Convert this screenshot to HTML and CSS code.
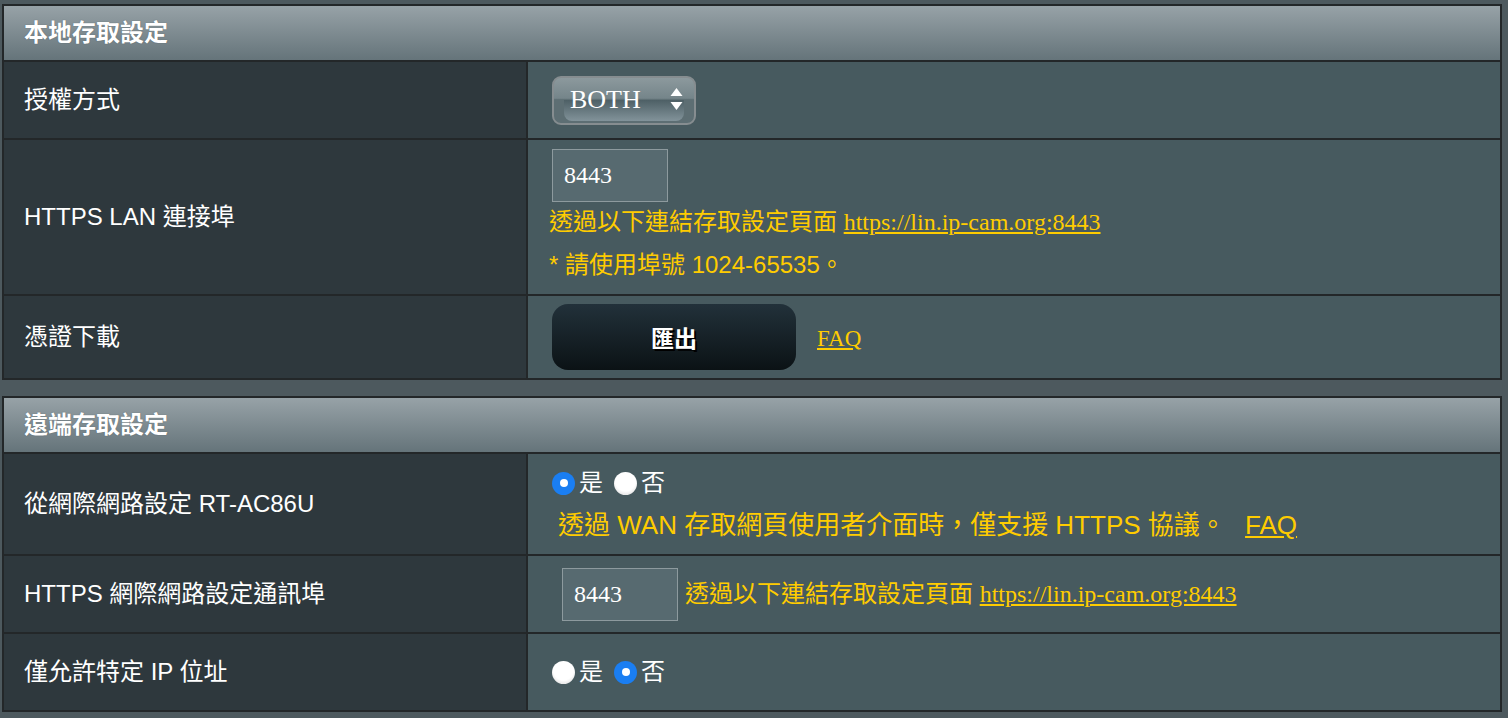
FILE: index.html
```html
<!DOCTYPE html>
<html lang="zh-Hant">
<head>
<meta charset="utf-8">
<title>存取設定</title>
<link rel="stylesheet" href="styles.css">
</head>
<body>
<section class="panel panel-local">
  <div class="panel-head">本地存取設定</div>

  <div class="label">授權方式</div>
  <div class="value">
    <div class="select">
      <span class="select-text">BOTH</span>
      <svg class="select-arrows" width="13" height="23" viewBox="0 0 13 23"><polygon points="6.5,0 12.5,8 0.5,8" fill="#fff"/><polygon points="0.5,14 12.5,14 6.5,22" fill="#fff"/></svg>
    </div>
  </div>

  <div class="label">HTTPS LAN 連接埠</div>
  <div class="value value-stack">
    <div class="input">8443</div>
    <div class="note note-first">透過以下連結存取設定頁面 <a class="link-serif" href="#">https://lin.ip-cam.org:8443</a></div>
    <div class="note note-second">* 請使用埠號 1024-65535。</div>
  </div>

  <div class="label">憑證下載</div>
  <div class="value">
    <div class="btn">匯出</div>
    <a class="faq-serif" href="#">FAQ</a>
  </div>
</section>

<section class="panel panel-remote">
  <div class="panel-head">遠端存取設定</div>

  <div class="label">從網際網路設定 RT-AC86U</div>
  <div class="value value-col">
    <div class="radios">
      <span class="radio on"></span><span class="radio-text">是</span>
      <span class="radio"></span><span class="radio-text">否</span>
    </div>
    <div class="note note-wan">透過 WAN 存取網頁使用者介面時，僅支援 HTTPS 協議。 <a class="faq-sans" href="#">FAQ</a></div>
  </div>

  <div class="label">HTTPS 網際網路設定通訊埠</div>
  <div class="value">
    <div class="input input-shift">8443</div>
    <div class="note note-inline">透過以下連結存取設定頁面 <a class="link-serif" href="#">https://lin.ip-cam.org:8443</a></div>
  </div>

  <div class="label">僅允許特定 IP 位址</div>
  <div class="value">
    <div class="radios">
      <span class="radio"></span><span class="radio-text">是</span>
      <span class="radio on"></span><span class="radio-text">否</span>
    </div>
  </div>
</section>
</body>
</html>
```

FILE: styles.css
```css
html, body {
  margin: 0;
  padding: 0;
}

body {
  background: #4d595e;
  color: #ffffff;
  font-family: "Liberation Sans", "Noto Sans CJK TC", sans-serif;
  width: 1508px;
  height: 718px;
  overflow: hidden;
}

.panel {
  display: grid;
  grid-template-columns: 522px 972px;
  gap: 2px;
  padding: 2px;
  background: #232729;
  width: 1500px;
  box-sizing: border-box;
  margin: 4px 0 0 2px;
}

.panel-local {
  grid-template-rows: 54px 76px 154px 82px;
}

.panel-remote {
  margin-top: 16px;
  grid-template-rows: 54px 100px 76px 76px;
}

.panel-head {
  grid-column: 1 / -1;
  background: linear-gradient(#97a2a7, #65747a);
  display: flex;
  align-items: center;
  padding-left: 20px;
  font-size: 24px;
  font-weight: bold;
  line-height: 1;
  text-shadow: 0 0 1px rgba(40, 50, 55, 0.6);
}

.label {
  background: #2e383d;
  display: flex;
  align-items: center;
  padding-left: 20px;
  font-size: 24px;
  line-height: 1;
}

.value {
  background: #475a5f;
  display: flex;
  align-items: center;
  padding-left: 24px;
}

.value-stack {
  flex-direction: column;
  align-items: flex-start;
  justify-content: flex-start;
  padding-top: 9px;
  box-sizing: border-box;
}

.value-col {
  flex-direction: column;
  align-items: flex-start;
  justify-content: center;
  gap: 12px;
}

/* select */
.select {
  position: relative;
  width: 144px;
  height: 49px;
  box-sizing: border-box;
  border: 2px solid #868d90;
  border-radius: 9px;
  background: linear-gradient(#8c999d 0%, #75858a 45%, #5d6e73 48%, #5d6e73 100%);
  display: flex;
  align-items: center;
  padding: 0 11px 0 16px;
  overflow: hidden;
}

.select::after {
  content: "";
  position: absolute;
  left: 10px;
  right: 10px;
  top: 22px;
  bottom: 2px;
  border-radius: 0 0 8px 8px;
  background: linear-gradient(#4d5f65, #82939a);
}

.select-text {
  position: relative;
  z-index: 1;
  font-family: "Liberation Serif", serif;
  font-size: 26px;
  line-height: 1;
  color: #ffffff;
  margin-top: -1px;
}

.select-arrows {
  position: relative;
  z-index: 1;
  margin-left: auto;
  margin-top: -1px;
}

/* input */
.input {
  width: 116px;
  height: 53px;
  box-sizing: border-box;
  border: 1px solid #8d9a9e;
  background: #576a70;
  font-family: "Liberation Serif", serif;
  font-size: 24px;
  color: #ffffff;
  display: flex;
  align-items: center;
  padding-left: 11px;
  flex-shrink: 0;
}

.input-shift {
  margin-left: 10px;
  margin-top: 1px;
}

/* notes */
.note {
  color: #ffcc00;
  font-size: 24px;
  line-height: 30px;
  white-space: nowrap;
}

.note-first {
  margin-top: 1px;
  line-height: 38px;
  margin-left: -3px;
}

.note-second {
  margin-top: 5px;
  line-height: 38px;
  margin-left: -3px;
}

.note-wan {
  padding-left: 6px;
  font-size: 26px;
}

.note-inline {
  margin-left: 7px;
}

.link-serif {
  color: #ffcc00;
  font-family: "Liberation Serif", serif;
  font-size: 24px;
}

.faq-sans {
  color: #ffcc00;
  margin-left: 12px;
}

/* button */
.btn {
  width: 244px;
  height: 66px;
  border-radius: 16px;
  background: linear-gradient(#22313a, #0b1215);
  display: flex;
  align-items: center;
  justify-content: center;
  font-size: 23px;
  font-weight: bold;
  color: #ffffff;
  text-shadow: 2px 2px 0 #000000;
}

.faq-serif {
  margin-left: 21px;
  margin-top: 3px;
  color: #ffcc00;
  font-family: "Liberation Serif", serif;
  font-size: 23px;
}

/* radios */
.radios {
  display: flex;
  align-items: center;
  height: 30px;
}

.radio {
  width: 23px;
  height: 23px;
  border-radius: 50%;
  box-sizing: border-box;
  background: radial-gradient(circle at 50% 40%, #ffffff 55%, #e4e4e4 80%, #bdbdbd 100%);
  position: relative;
  flex-shrink: 0;
}

.radio.on {
  background: #1a7ef2;
}

.radio.on::after {
  content: "";
  position: absolute;
  left: 7.5px;
  top: 7.5px;
  width: 8px;
  height: 8px;
  border-radius: 50%;
  background: #ffffff;
}

.radio-text {
  font-size: 24px;
  line-height: 1;
  margin-left: 4px;
  margin-right: 11px;
}
```
